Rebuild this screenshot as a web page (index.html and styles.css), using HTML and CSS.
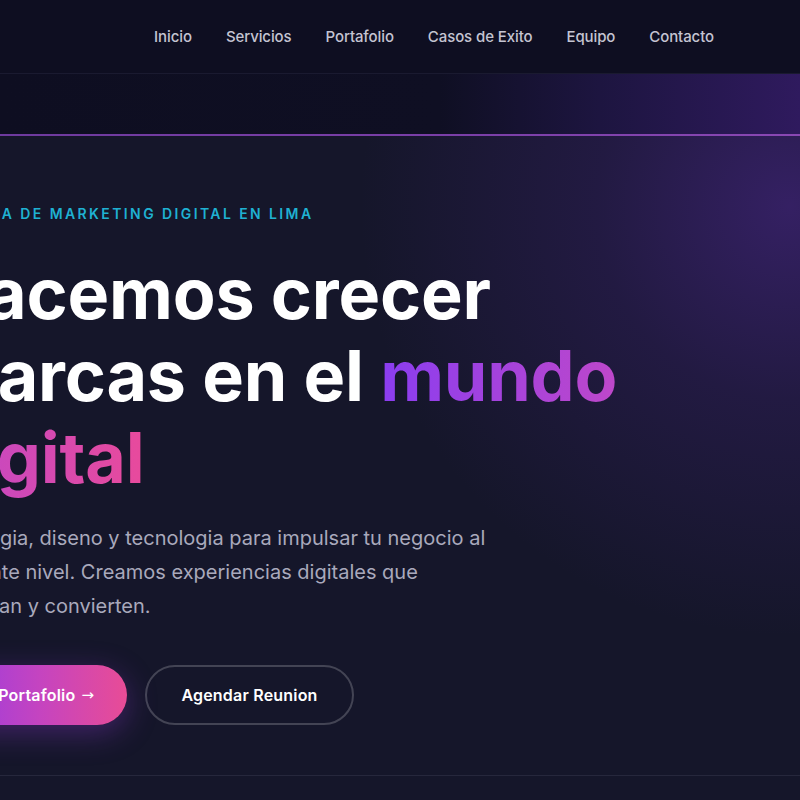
FILE: index.html
```html
<!DOCTYPE html>
<html lang="es">
<head>
<meta charset="utf-8">
<title>Agencia de Marketing Digital</title>
<link rel="stylesheet" href="styles.css">
</head>
<body>
<header class="topbar">
  <nav class="nav">
    <a href="#" class="nav-link">Inicio</a>
    <a href="#" class="nav-link">Servicios</a>
    <a href="#" class="nav-link">Portafolio</a>
    <a href="#" class="nav-link">Casos de Exito</a>
    <a href="#" class="nav-link">Equipo</a>
    <a href="#" class="nav-link">Contacto</a>
  </nav>
</header>
<div class="band"></div>
<div class="accent-line"></div>
<section class="hero">
  <div class="hero-inner">
    <p class="eyebrow">AGENCIA DE MARKETING DIGITAL EN LIMA</p>
    <h1 class="title">Hacemos crecer<br>marcas en el <span class="grad">mundo digital</span></h1>
    <p class="lead">Estrategia, diseno y tecnologia para impulsar tu negocio al siguiente nivel. Creamos experiencias digitales que conectan y convierten.</p>
    <div class="actions">
      <a href="#" class="btn btn-primary">Ver Portafolio <span class="arrow">→</span></a>
      <a href="#" class="btn btn-outline">Agendar Reunion</a>
    </div>
  </div>
</section>
<div class="below"></div>
</body>
</html>
```
FILE: styles.css
```css
* { box-sizing: border-box; }
html, body { margin: 0; padding: 0; }
body {
  background: #15162a;
  font-family: Inter, "Noto Sans", sans-serif;
  color: #ffffff;
  overflow: hidden;
  height: 800px;
}
.topbar {
  height: 74px;
  background: #0e0e21;
  border-bottom: 1px solid #1a1a30;
  display: flex;
  align-items: center;
  justify-content: flex-end;
  padding-right: 86px;
  padding-bottom: 1px;
}
.nav {
  display: flex;
  gap: 34px;
}
.nav-link {
  color: #c4c4d2;
  text-decoration: none;
  font-size: 15px;
  font-weight: 500;
  letter-spacing: -0.1px;
}
.band {
  height: 60px;
  background: linear-gradient(90deg, #0e0e21 0%, #0f0f23 55%, #1d1540 75%, #2f1a5e 100%);
}
.accent-line {
  height: 2px;
  background: linear-gradient(90deg, #6e3a9e 0%, #7b3fa8 60%, #8a48b4 100%);
}
.hero {
  height: 640px;
  background:
    radial-gradient(ellipse 430px 430px at 790px 70px, rgba(84, 42, 156, 0.5) 0%, rgba(68, 36, 128, 0.28) 45%, rgba(21, 22, 42, 0) 100%),
    #15162a;
  border-bottom: 1px solid #26273c;
}
.hero-inner {
  margin-left: -66px;
  padding-top: 69px;
}
.eyebrow {
  margin: 0;
  color: #1fb1d2;
  font-size: 14px;
  font-weight: 600;
  letter-spacing: 2.4px;
  line-height: 18px;
}
.title {
  margin: 30px 0 0;
  font-size: 70px;
  font-weight: 700;
  line-height: 82px;
  letter-spacing: -0.2px;
  color: #ffffff;
}
.grad {
  background: linear-gradient(90deg, #8a3df0 0%, #c048c8 55%, #e84a9c 100%);
  -webkit-background-clip: text;
  background-clip: text;
  color: transparent;
}
.lead {
  margin: 22px 0 0;
  width: 570px;
  color: #a9a9bc;
  font-size: 20px;
  line-height: 34px;
}
.actions {
  margin-top: 42px;
  display: flex;
  gap: 18px;
}
.btn {
  height: 60px;
  border-radius: 30px;
  display: flex;
  align-items: center;
  justify-content: center;
  gap: 6px;
  font-size: 16px;
  font-weight: 600;
  text-decoration: none;
  color: #ffffff;
  letter-spacing: 0.2px;
}
.arrow {
  font-family: "DejaVu Sans", sans-serif;
  font-weight: 400;
  font-size: 15px;
}
.btn-primary {
  width: 193px;
  background: linear-gradient(90deg, #8f3ae6 0%, #c544c0 55%, #e84c96 100%);
  box-shadow: 0 8px 30px rgba(150, 60, 220, 0.35);
}
.btn-outline {
  width: 209px;
  border: 2px solid rgba(255, 255, 255, 0.2);
  background: transparent;
}
```
